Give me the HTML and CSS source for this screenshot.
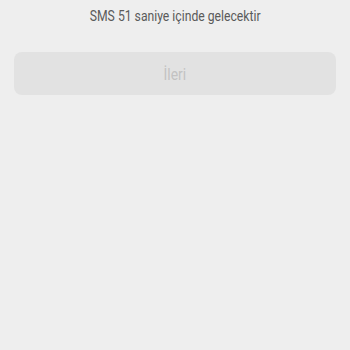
FILE: index.html
```html
<!DOCTYPE html>
<html lang="tr">
<head>
<meta charset="utf-8">
<link rel="stylesheet" href="styles.css">
</head>
<body>
<div class="page">
  <p class="info"><span class="squeeze">SMS 51 saniye içinde gelecektir</span></p>
  <button class="next" disabled><span class="squeeze-btn">İleri</span></button>
</div>
</body>
</html>
```
FILE: styles.css
```css
html, body {
  margin: 0;
  padding: 0;
  background: #eeeeee;
  height: 100%;
}
.page {
  display: flex;
  flex-direction: column;
  padding: 0 14px;
  font-family: Roboto, "Noto Sans", sans-serif;
}
.info {
  margin: 7px 0 0;
  height: 18px;
  line-height: 18px;
  text-align: center;
  font-size: 14px;
  color: #5a5a5a;
}
.squeeze {
  display: inline-block;
  transform: scaleX(0.87);
}
.next {
  margin-top: 27px;
  height: 43px;
  border: none;
  border-radius: 8px;
  background: #e2e2e2;
  color: #c2c2c2;
  font-family: Roboto, "Noto Sans", sans-serif;
  font-size: 17px;
  padding: 0;
}
.squeeze-btn {
  display: inline-block;
  transform: scaleX(0.82);
}
```
